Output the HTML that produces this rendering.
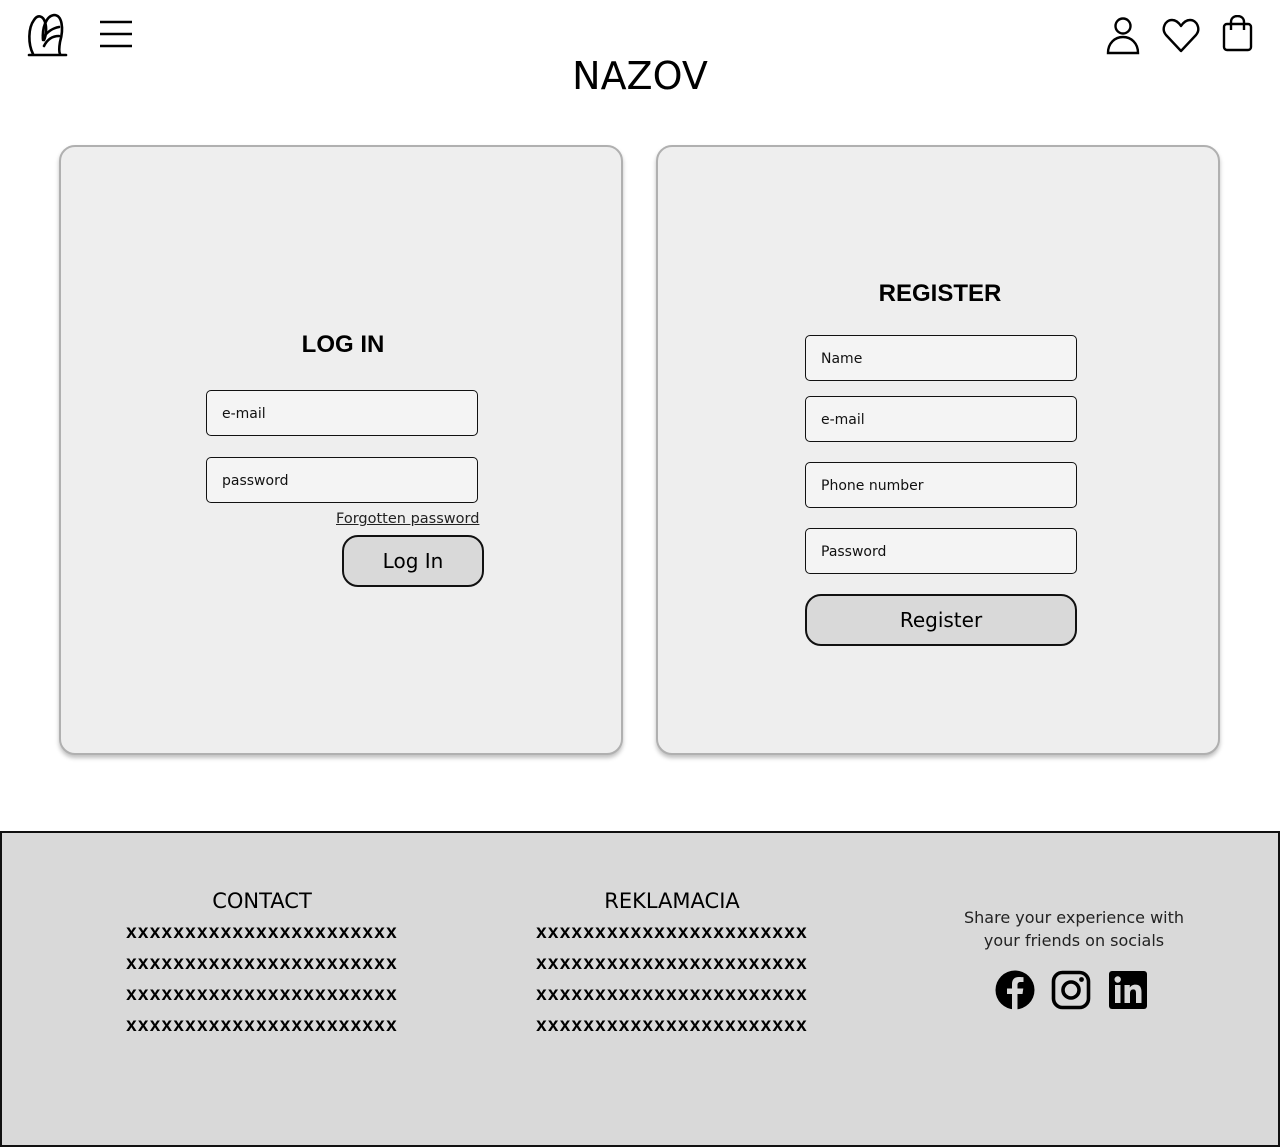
<!DOCTYPE html>
<html><head><meta charset="utf-8"><style>
*{margin:0;padding:0;box-sizing:border-box}
body{width:1280px;height:1147px;position:relative;background:#fff;font-family:"DejaVu Sans","Liberation Sans",sans-serif;color:#000;overflow:hidden}
.abs{position:absolute}
.card{position:absolute;top:145px;width:564px;height:610px;background:#eeeeee;border:2px solid #b0b0b0;border-radius:16px;box-shadow:0 3px 4px rgba(0,0,0,.25)}
.inp{position:absolute;width:272px;height:46px;background:#f4f4f4;border:1.5px solid #111;border-radius:5px;font-size:14px;padding-left:15px;line-height:47px;color:#111}
.btn{position:absolute;background:#d9d9d9;border:2px solid #111;border-radius:16px;text-align:center;font-size:20px;font-weight:500}
h2{position:absolute;font-family:"Liberation Sans",sans-serif;font-weight:bold;font-size:24px;text-align:center}
.foot{position:absolute;left:0;top:831px;width:1280px;height:316px;background:#d9d9d9;border:2px solid #111}
.col{position:absolute;width:300px;text-align:center}
.col .t{font-size:21px;margin-bottom:4px}
.col .x{font-family:"Liberation Sans",sans-serif;font-weight:bold;font-size:19px;letter-spacing:1.25px;line-height:31px}
</style></head><body>
<svg class="abs" style="left:26px;top:10px" width="44" height="48" viewBox="0 0 44 48">
<g fill="none" stroke="#000" stroke-width="2.6" stroke-linecap="round">
<path d="M7 44 C2 34 2 18 8 10 C12 4 17 6 19 12 C21 18 20 26 18 30"/>
<path d="M17 30 C16 18 20 6 28 5 C36 5 38 18 34 32 C33 38 33 42 34 44"/>
<path d="M18 36 C22 28 28 26 33 26"/><path d="M17 28 C21 22 27 18 33 17"/>
<path d="M3 45 H40"/></g></svg>
<svg class="abs" style="left:99px;top:20px" width="34" height="28"><g stroke="#000" stroke-width="2.6"><path d="M1 2H33M1 14H33M1 26H33"/></g></svg>
<svg class="abs" style="left:1106px;top:16px" width="34" height="40" viewBox="0 0 34 40"><g fill="none" stroke="#000" stroke-width="2.4"><circle cx="17" cy="10" r="7.5"/><path d="M2 37 C2 27 9 21 17 21 C25 21 32 27 32 37 Z"/></g></svg>
<svg class="abs" style="left:1162px;top:18px" width="38" height="36" viewBox="0 0 38 36"><path d="M19 33 L4 17 C-1 11 3 2 10 2 C14 2 17 5 19 8 C21 5 24 2 28 2 C35 2 39 11 34 17 Z" fill="none" stroke="#000" stroke-width="2.4" stroke-linejoin="round"/></svg>
<svg class="abs" style="left:1222px;top:15px" width="32" height="38" viewBox="0 0 32 38"><g fill="none" stroke="#000" stroke-width="2.4" stroke-linejoin="round"><rect x="2" y="9" width="27" height="26" rx="3"/><path d="M9 15 V7 C9 3 12 1 15.5 1 C19 1 22 3 22 7 V15"/></g></svg>
<div class="abs" style="left:0;width:1280px;top:54px;text-align:center;font-size:38px;">NAZOV</div>

<div class="card" style="left:59px">
 <h2 style="left:0;width:564px;top:184px">LOG IN</h2>
 <div class="inp" style="left:145px;top:243px">e-mail</div>
 <div class="inp" style="left:145px;top:310px">password</div>
 <div class="abs" style="left:275px;top:364px;font-size:14.5px;text-decoration:underline;color:#222">Forgotten password</div>
 <div class="btn" style="left:281px;top:388px;width:142px;height:52px;line-height:48px">Log In</div>
</div>
<div class="card" style="left:656px">
 <h2 style="left:0;width:564px;top:133px">REGISTER</h2>
 <div class="inp" style="left:147px;top:188px">Name</div>
 <div class="inp" style="left:147px;top:249px">e-mail</div>
 <div class="inp" style="left:147px;top:315px">Phone number</div>
 <div class="inp" style="left:147px;top:381px">Password</div>
 <div class="btn" style="left:147px;top:447px;width:272px;height:52px;line-height:48px">Register</div>
</div>

<div class="foot">
 <div class="col" style="left:110px;top:56px"><div class="t">CONTACT</div><div class="x">xxxxxxxxxxxxxxxxxxxxxxx<br>xxxxxxxxxxxxxxxxxxxxxxx<br>xxxxxxxxxxxxxxxxxxxxxxx<br>xxxxxxxxxxxxxxxxxxxxxxx</div></div>
 <div class="col" style="left:520px;top:56px"><div class="t">REKLAMACIA</div><div class="x">xxxxxxxxxxxxxxxxxxxxxxx<br>xxxxxxxxxxxxxxxxxxxxxxx<br>xxxxxxxxxxxxxxxxxxxxxxx<br>xxxxxxxxxxxxxxxxxxxxxxx</div></div>
 <div class="abs" style="left:932px;width:280px;top:73px;text-align:center;font-size:16px;line-height:23px;color:#222">Share your experience with<br>your friends on socials</div>
 <svg class="abs" style="left:993px;top:137px" width="40" height="40" viewBox="0 0 40 40"><circle cx="20" cy="20" r="19.5" fill="#000"/><path d="M22.5 40 V24 H27.5 L28.3 18.5 H22.5 V15 C22.5 13.3 23.3 12 25.6 12 H28.5 V7.3 C27.5 7.1 25.6 7 23.8 7 C19.5 7 17 9.5 17 14.3 V18.5 H12 V24 H17 V40 Z" fill="#d9d9d9"/></svg>
 <svg class="abs" style="left:1049px;top:137px" width="40" height="40" viewBox="0 0 40 40"><g fill="none" stroke="#000" stroke-width="3.6"><rect x="2.5" y="2.5" width="35" height="35" rx="9"/><circle cx="20" cy="20" r="8"/></g><circle cx="30.5" cy="9.5" r="2.4" fill="#000"/></svg>
 <svg class="abs" style="left:1107px;top:138px" width="38" height="38" viewBox="0 0 38 38"><rect width="38" height="38" rx="3" fill="#000"/><rect x="6" y="14" width="5.5" height="18" fill="#d9d9d9"/><circle cx="8.7" cy="8.5" r="3.2" fill="#d9d9d9"/><path d="M15.5 14 H20.8 V16.6 C21.8 14.9 23.7 13.6 26.4 13.6 C31 13.6 32.5 16.5 32.5 21 V32 H27 V22.3 C27 20 26.4 18.4 24.3 18.4 C22 18.4 21 20 21 22.5 V32 H15.5 Z" fill="#d9d9d9"/></svg>
</div>
</body></html>
